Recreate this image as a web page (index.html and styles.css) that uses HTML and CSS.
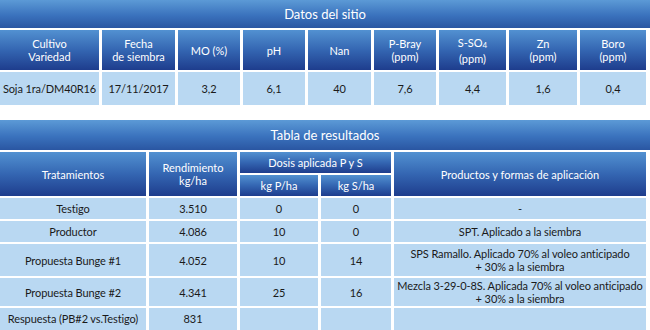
FILE: index.html
```html
<!DOCTYPE html>
<html lang="es">
<head>
<meta charset="utf-8">
<link rel="stylesheet" href="styles.css">
</head>
<body>
<section class="block">
  <div class="title t1">Datos del sitio</div>
  <div class="grid g1">
    <div class="hd"><span>Cultivo<br>Variedad</span></div>
    <div class="hd"><span>Fecha<br>de siembra</span></div>
    <div class="hd">MO (%)</div>
    <div class="hd">pH</div>
    <div class="hd">Nan</div>
    <div class="hd"><span>P-Bray<br>(ppm)</span></div>
    <div class="hd"><span>S-SO<span class="sub">4</span><br>(ppm)</span></div>
    <div class="hd"><span>Zn<br>(ppm)</span></div>
    <div class="hd"><span>Boro<br>(ppm)</span></div>
    <div class="cd">Soja 1ra/DM40R16</div>
    <div class="cd">17/11/2017</div>
    <div class="cd">3,2</div>
    <div class="cd">6,1</div>
    <div class="cd">40</div>
    <div class="cd">7,6</div>
    <div class="cd">4,4</div>
    <div class="cd">1,6</div>
    <div class="cd">0,4</div>
  </div>
</section>
<section class="block second">
  <div class="title t2">Tabla de resultados</div>
  <div class="grid g2">
    <div class="hd trat">Tratamientos</div>
    <div class="hd rend"><span>Rendimiento<br>kg/ha</span></div>
    <div class="hd dosis">Dosis aplicada P y S</div>
    <div class="hd prod">Productos y formas de aplicación</div>
    <div class="hd">kg P/ha</div>
    <div class="hd">kg S/ha</div>

    <div class="cd">Testigo</div>
    <div class="cd">3.510</div>
    <div class="cd">0</div>
    <div class="cd">0</div>
    <div class="cd">-</div>

    <div class="cd">Productor</div>
    <div class="cd">4.086</div>
    <div class="cd">10</div>
    <div class="cd">0</div>
    <div class="cd">SPT. Aplicado a la siembra</div>

    <div class="cd">Propuesta Bunge #1</div>
    <div class="cd">4.052</div>
    <div class="cd">10</div>
    <div class="cd">14</div>
    <div class="cd"><span>SPS Ramallo. Aplicado 70% al voleo anticipado<br>+ 30% a la siembra</span></div>

    <div class="cd">Propuesta Bunge #2</div>
    <div class="cd">4.341</div>
    <div class="cd">25</div>
    <div class="cd">16</div>
    <div class="cd"><span>Mezcla 3-29-0-8S. Aplicada 70% al voleo anticipado<br>+ 30% a la siembra</span></div>

    <div class="cd top">Respuesta (PB#2 vs.Testigo)</div>
    <div class="cd top">831</div>
    <div class="cd"></div>
    <div class="cd"></div>
    <div class="cd"></div>
  </div>
</section>
</body>
</html>
```
FILE: styles.css
```css
html, body {
  margin: 0;
  padding: 0;
  background: #ffffff;
}
body {
  width: 650px;
  height: 330px;
  overflow: hidden;
  font-family: Lato, "Liberation Sans", sans-serif;
  font-size: 11px;
  color: #1a1a1a;
}
.block {
  display: flex;
  flex-direction: column;
  gap: 2px;
}
.second {
  margin-top: 15px;
}
.title {
  display: flex;
  align-items: center;
  justify-content: center;
  color: #ffffff;
  font-size: 13px;
  background: linear-gradient(#5c9ad6, #3a72bd 55%, #2a56a2);
}
.t1 { height: 28px; }
.t2 { height: 30px; }
.grid {
  display: grid;
  column-gap: 3px;
  width: 646px;
}
.g1 {
  grid-template-columns: 99px 73px 62px 62px 63px 62px 67px 68px 66px;
  grid-template-rows: 40px 33px;
  row-gap: 2px;
}
.g2 {
  grid-template-columns: 146px 88px 78px 70px 252px;
  grid-template-rows: 21px 21px 21px 21px 32px 28px 24px;
  row-gap: 2px;
}
.hd, .cd {
  display: flex;
  align-items: center;
  justify-content: center;
  text-align: center;
  line-height: 13px;
  white-space: nowrap;
}
.hd {
  color: #ffffff;
  background: linear-gradient(#5291d1, #3466b2 50%, #1e3d8d);
}
.cd {
  background: #b9d8f2;
  letter-spacing: -0.1px;
}
.cd.top {
  align-items: flex-start;
  padding-top: 4px;
}
.sub {
  font-size: 8px;
  vertical-align: -1px;
}
.trat { grid-column: 1; grid-row: 1 / 3; }
.rend { grid-column: 2; grid-row: 1 / 3; }
.dosis { grid-column: 3 / 5; grid-row: 1; }
.prod { grid-column: 5; grid-row: 1 / 3; }
```
